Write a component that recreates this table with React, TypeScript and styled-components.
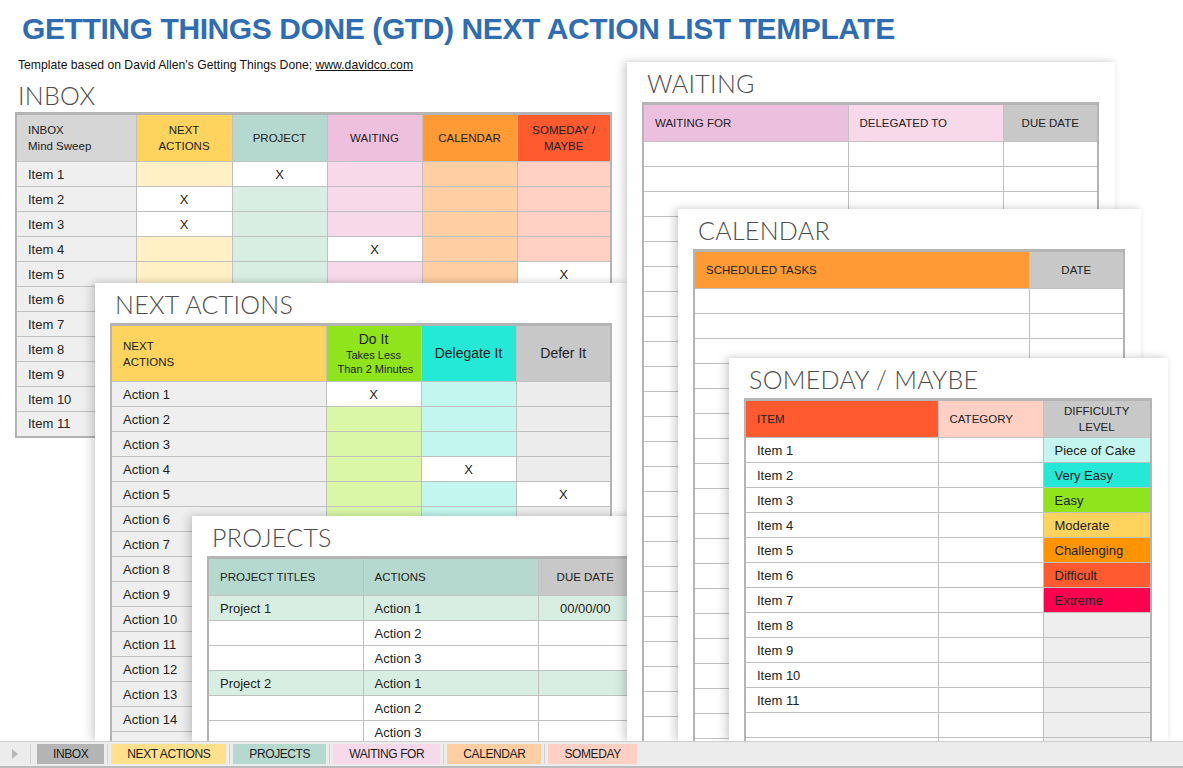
import React from "react";
import styled, { createGlobalStyle } from "styled-components";

type Align = "left" | "center";

type Column = {
  head: React.ReactNode;
  w: number;
  headBg: string;
  bodyBg: string;
  headAlign?: Align;
  bodyAlign?: Align;
};

type Cell = string | { text?: string; bg?: string };

const GlobalStyle = createGlobalStyle`
  html, body {
    margin: 0;
    padding: 0;
    background: #ffffff;
  }
  body {
    font-family: "Liberation Sans", Arial, sans-serif;
    color: #222222;
  }
  * {
    box-sizing: border-box;
  }
`;

const Page = styled.div`
  width: 1183px;
  height: 768px;
  display: flex;
  flex-direction: column;
  overflow: hidden;
  background: #ffffff;
`;

const Canvas = styled.main`
  position: relative;
  flex: 1;
  overflow: hidden;
  padding: 12px 0 0 15px;
`;

const Title = styled.h1`
  margin: 0 0 0 7px;
  font-size: 30px;
  line-height: 34px;
  font-weight: 700;
  letter-spacing: -0.4px;
  color: #2f6db3;
  white-space: nowrap;
`;

const Credit = styled.p`
  margin: 12px 0 0 3px;
  font-size: 12.2px;
  line-height: 14px;
  color: #111111;

  a {
    color: #111111;
    text-decoration: underline;
  }
`;

const Heading = styled.h2`
  margin: 9px 0 3px 3px;
  font-family: Lato, "Liberation Sans", sans-serif;
  font-weight: 300;
  font-size: 25px;
  line-height: 28px;
  letter-spacing: 0.3px;
  color: #4d4d4d;
`;

const Sheet = styled.section<{ $left: number; $top: number; $width: number }>`
  position: absolute;
  left: ${(p) => p.$left}px;
  top: ${(p) => p.$top}px;
  width: ${(p) => p.$width}px;
  bottom: 0;
  overflow: hidden;
  background: #ffffff;
  padding: 7px 0 0 15px;
  box-shadow: -4px 0 9px rgba(0, 0, 0, 0.16), 0 -2px 5px rgba(0, 0, 0, 0.05);
`;

const SheetHeading = styled(Heading)`
  margin: 0 0 5px 5px;
`;

const Grid = styled.table<{ $width: number }>`
  width: ${(p) => p.$width}px;
  table-layout: fixed;
  border-collapse: collapse;
  border: 2px solid #b4b4b4;
  border-top-width: 3px;
  font-size: 13px;
  color: #222222;
`;

const Col = styled.col<{ $w: number }>`
  width: ${(p) => p.$w}px;
`;

const HeadCell = styled.th<{ $bg: string; $align: Align; $h: number }>`
  height: ${(p) => p.$h}px;
  padding: 0 11px;
  background: ${(p) => p.$bg};
  text-align: ${(p) => p.$align};
  font-weight: 400;
  font-size: 11.5px;
  line-height: 16px;
  border: 1px solid #c2c2c2;
  border-top: none;
  overflow: hidden;
  white-space: nowrap;
`;

const BodyCell = styled.td<{ $bg: string; $align: Align }>`
  height: 25px;
  padding: 0 11px;
  background: ${(p) => p.$bg};
  text-align: ${(p) => p.$align};
  border: 1px solid #c0c0c0;
  white-space: nowrap;
  overflow: hidden;
`;

const BigHead = styled.div`
  font-size: 14px;
  line-height: 17px;
`;

const SmallHead = styled.div`
  font-size: 11px;
  line-height: 14px;
`;

const TabBar = styled.footer`
  height: 27px;
  flex: none;
  display: flex;
  align-items: center;
  background: #ececec;
  border-top: 1px solid #cdcdcd;
  border-bottom: 2px solid #bcbcbc;
`;

const ScrollArrow = styled.div`
  width: 30px;
  display: flex;
  justify-content: center;

  &::before {
    content: "";
    border-left: 6px solid #b9b9b9;
    border-top: 5px solid transparent;
    border-bottom: 5px solid transparent;
  }
`;

const TabSlot = styled.div`
  display: flex;
  align-items: center;
  height: 20px;
  padding: 0 3px 0 6px;
  border-left: 1px solid #d2d2d2;

  & + & {
    padding-left: 3px;
  }
`;

const Tab = styled.div<{ $bg: string }>`
  height: 20px;
  padding: 0 16px;
  background: ${(p) => p.$bg};
  font-size: 12px;
  line-height: 20px;
  letter-spacing: -0.4px;
  color: #1b1b1b;
  white-space: nowrap;
`;

function SheetTable({
  cols,
  rows,
  headH,
}: {
  cols: Column[];
  rows: Cell[][];
  headH: number;
}) {
  const width = cols.reduce((s, c) => s + c.w, 0);
  return (
    <Grid $width={width}>
      <colgroup>
        {cols.map((c, i) => (
          <Col key={i} $w={c.w} />
        ))}
      </colgroup>
      <thead>
        <tr>
          {cols.map((c, i) => (
            <HeadCell key={i} $bg={c.headBg} $align={c.headAlign ?? "center"} $h={headH}>
              {c.head}
            </HeadCell>
          ))}
        </tr>
      </thead>
      <tbody>
        {rows.map((row, r) => (
          <tr key={r}>
            {cols.map((c, i) => {
              const cell = row[i];
              const text = typeof cell === "string" ? cell : cell?.text ?? "";
              const bg = typeof cell === "object" && cell?.bg ? cell.bg : c.bodyBg;
              return (
                <BodyCell key={i} $bg={bg} $align={c.bodyAlign ?? "left"}>
                  {text}
                </BodyCell>
              );
            })}
          </tr>
        ))}
      </tbody>
    </Grid>
  );
}

const X = { text: "X", bg: "#ffffff" };
const blank = (n: number, cols: number): Cell[][] =>
  Array.from({ length: n }, () => Array.from({ length: cols }, () => ""));

const inboxCols: Column[] = [
  { head: <>INBOX<br />Mind Sweep</>, w: 120, headBg: "#d6d6d6", bodyBg: "#efefef", headAlign: "left" },
  { head: <>NEXT<br />ACTIONS</>, w: 96, headBg: "#ffd45e", bodyBg: "#fff0c5", bodyAlign: "center" },
  { head: "PROJECT", w: 95, headBg: "#b6d9cf", bodyBg: "#d8eee3", bodyAlign: "center" },
  { head: "WAITING", w: 95, headBg: "#eec0de", bodyBg: "#f8d9ea", bodyAlign: "center" },
  { head: "CALENDAR", w: 95, headBg: "#ff9a35", bodyBg: "#ffcea2", bodyAlign: "center" },
  { head: <>SOMEDAY /<br />MAYBE</>, w: 94, headBg: "#ff5a30", bodyBg: "#ffd0c3", bodyAlign: "center" },
];

// which column holds the X for each inbox item
const inboxMarks: Record<number, number> = { 1: 2, 2: 1, 3: 1, 4: 3, 5: 5 };
const inboxRows: Cell[][] = Array.from({ length: 11 }, (_, i) => {
  const row: Cell[] = [`Item ${i + 1}`, "", "", "", "", ""];
  const m = inboxMarks[i + 1];
  if (m) row[m] = X;
  return row;
});

const nextCols: Column[] = [
  { head: <>NEXT<br />ACTIONS</>, w: 215, headBg: "#ffd45e", bodyBg: "#efefef", headAlign: "left" },
  {
    head: (
      <>
        <BigHead>Do It</BigHead>
        <SmallHead>Takes Less<br />Than 2 Minutes</SmallHead>
      </>
    ),
    w: 95,
    headBg: "#8fe41b",
    bodyBg: "#d9f7a7",
    bodyAlign: "center",
  },
  { head: <BigHead>Delegate It</BigHead>, w: 95, headBg: "#24e9d7", bodyBg: "#c2f6ee", bodyAlign: "center" },
  { head: <BigHead>Defer It</BigHead>, w: 95, headBg: "#c8c8c8", bodyBg: "#ececec", bodyAlign: "center" },
];

const nextMarks: Record<number, number> = { 1: 1, 4: 2, 5: 3 };
const nextRows: Cell[][] = Array.from({ length: 15 }, (_, i) => {
  const row: Cell[] = [i < 14 ? `Action ${i + 1}` : "", "", "", ""];
  const m = nextMarks[i + 1];
  if (m) row[m] = X;
  return row;
});

const projCols: Column[] = [
  { head: "PROJECT TITLES", w: 155, headBg: "#b6d9cf", bodyBg: "#ffffff", headAlign: "left" },
  { head: "ACTIONS", w: 175, headBg: "#b6d9cf", bodyBg: "#ffffff", headAlign: "left" },
  { head: "DUE DATE", w: 95, headBg: "#c8c8c8", bodyBg: "#ffffff", bodyAlign: "center" },
];

const green = "#d8eee3";
const projRows: Cell[][] = [1, 2].flatMap((n) => [
  [
    { text: `Project ${n}`, bg: green },
    { text: "Action 1", bg: green },
    { text: n === 1 ? "00/00/00" : "", bg: green },
  ],
  ["", "Action 2", ""],
  ["", "Action 3", ""],
]);

const waitCols: Column[] = [
  { head: "WAITING FOR", w: 205, headBg: "#edbfdf", bodyBg: "#ffffff", headAlign: "left" },
  { head: "DELEGATED TO", w: 155, headBg: "#f8d9ea", bodyBg: "#ffffff", headAlign: "left" },
  { head: "DUE DATE", w: 95, headBg: "#c8c8c8", bodyBg: "#ffffff" },
];

const calCols: Column[] = [
  { head: "SCHEDULED TASKS", w: 335, headBg: "#ff9a35", bodyBg: "#ffffff", headAlign: "left" },
  { head: "DATE", w: 95, headBg: "#c8c8c8", bodyBg: "#ffffff" },
];

const somedayCols: Column[] = [
  { head: "ITEM", w: 193, headBg: "#ff5a30", bodyBg: "#ffffff", headAlign: "left" },
  { head: "CATEGORY", w: 105, headBg: "#ffd0c3", bodyBg: "#ffffff", headAlign: "left" },
  { head: <>DIFFICULTY<br />LEVEL</>, w: 108, headBg: "#c8c8c8", bodyBg: "#eeeeee" },
];

const levels = [
  { text: "Piece of Cake", bg: "#c2f6ee" },
  { text: "Very Easy", bg: "#24e9d7" },
  { text: "Easy", bg: "#8fe41b" },
  { text: "Moderate", bg: "#ffd45e" },
  { text: "Challenging", bg: "#ff9400" },
  { text: "Difficult", bg: "#ff5a30" },
  { text: "Extreme", bg: "#ff0050" },
];

const somedayRows: Cell[][] = Array.from({ length: 13 }, (_, i) => [
  i < 11 ? `Item ${i + 1}` : "",
  "",
  levels[i] ?? "",
]);

const tabs = [
  { label: "INBOX", bg: "#b4b4b4" },
  { label: "NEXT ACTIONS", bg: "#ffe08c" },
  { label: "PROJECTS", bg: "#b6d9cf" },
  { label: "WAITING FOR", bg: "#f8d9ea" },
  { label: "CALENDAR", bg: "#ffcea2" },
  { label: "SOMEDAY", bg: "#ffd0c3" },
];

export default function App() {
  return (
    <Page>
      <GlobalStyle />
      <Canvas>
        <Title>GETTING THINGS DONE (GTD) NEXT ACTION LIST TEMPLATE</Title>
        <Credit>
          Template based on David Allen's Getting Things Done; <a href="#">www.davidco.com</a>
        </Credit>
        <Heading>INBOX</Heading>
        <SheetTable cols={inboxCols} rows={inboxRows} headH={48} />

        <Sheet $left={95} $top={283} $width={532}>
          <SheetHeading>NEXT ACTIONS</SheetHeading>
          <SheetTable cols={nextCols} rows={nextRows} headH={57} />
        </Sheet>

        <Sheet $left={192} $top={516} $width={460}>
          <SheetHeading>PROJECTS</SheetHeading>
          <SheetTable cols={projCols} rows={projRows} headH={38} />
        </Sheet>

        <Sheet $left={627} $top={62} $width={488}>
          <SheetHeading>WAITING</SheetHeading>
          <SheetTable cols={waitCols} rows={blank(24, 3)} headH={38} />
        </Sheet>

        <Sheet $left={678} $top={209} $width={463}>
          <SheetHeading>CALENDAR</SheetHeading>
          <SheetTable cols={calCols} rows={blank(19, 2)} headH={38} />
        </Sheet>

        <Sheet $left={729} $top={358} $width={439}>
          <SheetHeading>SOMEDAY / MAYBE</SheetHeading>
          <SheetTable cols={somedayCols} rows={somedayRows} headH={38} />
        </Sheet>
      </Canvas>

      <TabBar>
        <ScrollArrow />
        {tabs.map((t) => (
          <TabSlot key={t.label}>
            <Tab $bg={t.bg}>{t.label}</Tab>
          </TabSlot>
        ))}
      </TabBar>
    </Page>
  );
}
